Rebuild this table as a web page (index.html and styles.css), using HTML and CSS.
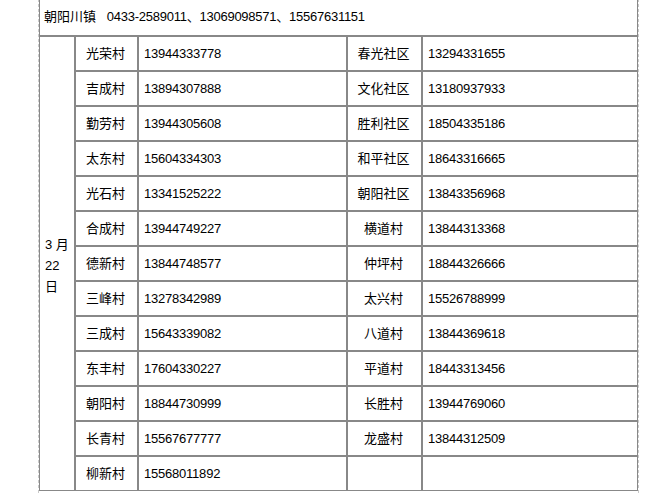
FILE: index.html
```html
<!DOCTYPE html>
<html lang="zh">
<head>
<meta charset="utf-8">
<title>联系方式</title>
<link rel="stylesheet" href="styles.css">
</head>
<body>
<div class="frame">
<table class="contacts">
<colgroup>
<col class="c-date"><col class="c-name"><col class="c-phone"><col class="c-name2"><col class="c-phone2">
</colgroup>
<tbody>
<tr class="head"><td colspan="5" class="title">朝阳川镇&nbsp;&nbsp; <span class="num">0433-2589011、13069098571、15567631151</span></td></tr>
<tr><td rowspan="13" class="date">3 月 22 日</td><td class="name">光荣村</td><td class="phone">13944333778</td><td class="name">春光社区</td><td class="phone">13294331655</td></tr>
<tr><td class="name">吉成村</td><td class="phone">13894307888</td><td class="name">文化社区</td><td class="phone">13180937933</td></tr>
<tr><td class="name">勤劳村</td><td class="phone">13944305608</td><td class="name">胜利社区</td><td class="phone">18504335186</td></tr>
<tr><td class="name">太东村</td><td class="phone">15604334303</td><td class="name">和平社区</td><td class="phone">18643316665</td></tr>
<tr><td class="name">光石村</td><td class="phone">13341525222</td><td class="name">朝阳社区</td><td class="phone">13843356968</td></tr>
<tr><td class="name">合成村</td><td class="phone">13944749227</td><td class="name">横道村</td><td class="phone">13844313368</td></tr>
<tr><td class="name">德新村</td><td class="phone">13844748577</td><td class="name">仲坪村</td><td class="phone">18844326666</td></tr>
<tr><td class="name">三峰村</td><td class="phone">13278342989</td><td class="name">太兴村</td><td class="phone">15526788999</td></tr>
<tr><td class="name">三成村</td><td class="phone">15643339082</td><td class="name">八道村</td><td class="phone">13844369618</td></tr>
<tr><td class="name">东丰村</td><td class="phone">17604330227</td><td class="name">平道村</td><td class="phone">18443313456</td></tr>
<tr><td class="name">朝阳村</td><td class="phone">18844730999</td><td class="name">长胜村</td><td class="phone">13944769060</td></tr>
<tr><td class="name">长青村</td><td class="phone">15567677777</td><td class="name">龙盛村</td><td class="phone">13844312509</td></tr>
<tr><td class="name">柳新村</td><td class="phone">15568011892</td><td class="name"></td><td class="phone"></td></tr>
</tbody>
</table>
</div>
</body>
</html>
```
FILE: styles.css
```css
html, body {
  margin: 0;
  padding: 0;
  background: #fff;
}
body {
  font-family: "Liberation Sans", "Noto Sans CJK SC", sans-serif;
  font-size: 13px;
  color: #000;
  overflow: hidden;
}
.frame {
  width: 599px;
  margin: -6px 0 0 38px;
  border-left: 1px dashed #c8c8c8;
  border-right: 1px dashed #c8c8c8;
  padding-bottom: 2px;
}
.contacts {
  width: 599px;
  table-layout: fixed;
  border-collapse: separate;
  border-spacing: 0;
}
.c-date { width: 36px; }
.c-name { width: 63px; }
.c-phone { width: 209px; }
.c-name2 { width: 75px; }
.c-phone2 { width: 216px; }
.contacts td {
  box-sizing: border-box;
  border: 1px solid #888;
  height: 35px;
  padding: 0 5px;
  line-height: 21px;
  vertical-align: middle;
  white-space: nowrap;
}
.contacts .head td {
  height: 42px;
  padding-left: 4px;
  padding-top: 2px;
}
.contacts td.date {
  white-space: normal;
  padding-top: 3px;
}
.contacts td.name {
  text-align: center;
  padding: 0 2px 0 0;
}
.contacts td.phone {
  text-align: left;
  letter-spacing: -0.22px;
}
.num {
  letter-spacing: -0.25px;
}
```
